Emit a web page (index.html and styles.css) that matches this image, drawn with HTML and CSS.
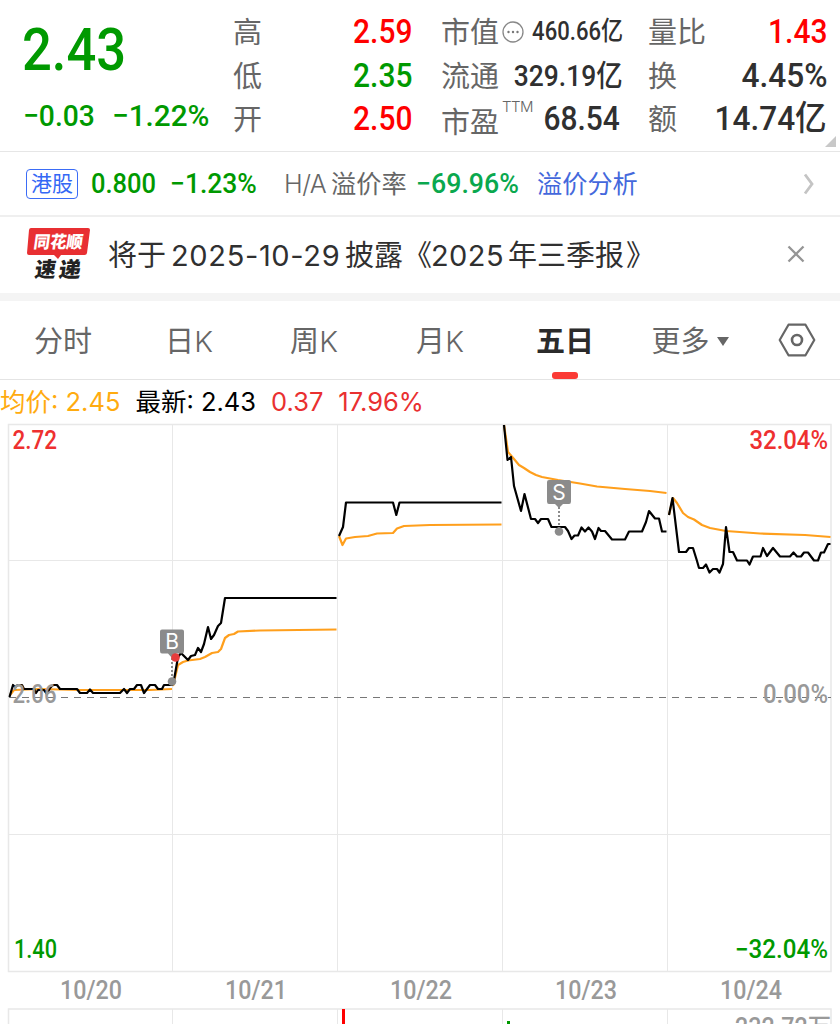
FILE: index.html
```html
<!DOCTYPE html>
<html lang="zh-CN">
<head>
  <meta charset="UTF-8">
  <meta name="viewport" content="width=device-width, initial-scale=1.0">
  <title>五日</title>
  <link rel="stylesheet" href="styles.css">
</head>
<body>
  <header class="quote">
    <div class="price">
      <div class="num last">2.43</div>
      <div class="change">
        <span class="num diff">−0.03</span>
        <span class="num rate">−1.22%</span>
      </div>
    </div>
    <div class="stats">
      <div class="stat"><span>高</span><b class="num red">2.59</b></div>
      <div class="stat"><span>低</span><b class="num green">2.35</b></div>
      <div class="stat"><span>开</span><b class="num red">2.50</b></div>
    </div>
    <div class="stats">
      <div class="stat">
        <span>市值</span>
        <svg class="dots" width="22" height="22" viewBox="0 0 22 22">
          <circle cx="11" cy="11" r="10" fill="none" stroke="#888" stroke-width="1.3"/>
          <circle cx="6.5" cy="11" r="1.2" fill="#777"/>
          <circle cx="11" cy="11" r="1.2" fill="#777"/>
          <circle cx="15.5" cy="11" r="1.2" fill="#777"/>
        </svg>
        <b class="num small">460.66亿</b>
      </div>
      <div class="stat"><span>流通</span><b class="num medium">329.19亿</b></div>
      <div class="stat"><span class="pe">市盈</span><sup>TTM</sup><b class="num">68.54</b></div>
    </div>
    <div class="stats last-stats">
      <div class="stat"><span>量比</span><b class="num red">1.43</b></div>
      <div class="stat"><span>换</span><b class="num wide">4.45%</b></div>
      <div class="stat"><span>额</span><b class="num wide">14.74亿</b></div>
    </div>
    <i class="corner"></i>
  </header>

  <div class="hk">
    <span class="badge">港股</span>
    <span class="num hk-price">0.800</span>
    <span class="num hk-rate">−1.23%</span>
    <span class="premium"><span class="ha">H/A</span>溢价率</span>
    <span class="num premium-rate">−69.96%</span>
    <a class="analysis">溢价分析</a>
    <svg class="arrow" width="12" height="22" viewBox="0 0 12 22">
      <path d="M2 1.5L9 11L2 20.5" fill="none" stroke="#c4c4c4" stroke-width="2.8"/>
    </svg>
  </div>

  <div class="notice">
    <svg class="logo" width="66" height="54" viewBox="0 0 66 54">
      <path d="M5 1H62Q64 1 64 3L61 26Q60.700 28 58.500 28H35L32 32L28 28H3Q1 28 1 26L3 3Q3.300 1 5 1Z" fill="#e82f32"/>
      <g transform="skewX(-8)">
        <text class="logo-text" x="10" y="21" textLength="49" lengthAdjust="spacingAndGlyphs" fill="#fff">同花顺</text>
        <text class="logo-text logo-big" x="15" y="50" textLength="21" lengthAdjust="spacingAndGlyphs" fill="#222">速</text>
        <text class="logo-text logo-big" x="39" y="50" textLength="22" lengthAdjust="spacingAndGlyphs" fill="#222">递</text>
      </g>
    </svg>
    <p><span>将于</span><span class="date">2025-10-29</span><span>披露</span><span class="book">《</span><span class="year">2025</span><span>年三季报</span><span class="book-end">》</span></p>
    <svg class="close" width="18" height="18" viewBox="0 0 18 18">
      <path d="M1.500 1.500L16.500 16.500M16.500 1.500L1.500 16.500" stroke="#959595" stroke-width="2.300"/>
    </svg>
  </div>

  <nav class="tabs">
    <a>分时</a>
    <a>日<em>K</em></a>
    <a>周<em>K</em></a>
    <a>月<em>K</em></a>
    <a class="active">五日</a>
    <a class="more">更多<i></i></a>
    <svg class="setting" width="38" height="34" viewBox="0 0 38 34">
      <path d="M10.500 1.700H27.500L36.300 17L27.500 32.300H10.500L1.700 17Z" fill="none" stroke="#666" stroke-width="2.200" stroke-linejoin="round"/>
      <circle cx="19" cy="17" r="5" fill="none" stroke="#666" stroke-width="2.600"/>
    </svg>
  </nav>

  <div class="info">
    <span class="avg">均价: <em>2.45</em></span>
    <span class="now">最新: <em>2.43</em></span>
    <span class="up">0.37</span>
    <span class="up">17.96%</span>
  </div>

  <svg class="chart" width="840" height="601" viewBox="0 423 840 601">
    <!-- grid -->
    <g class="grid">
      <path d="M172.500 424V972M337.500 424V972M502.500 424V972M667.500 424V972M8 560.500H831M8 834.500H831"/>
      <path d="M172.500 1009V1024M337.500 1009V1024M502.500 1009V1024M667.500 1009V1024"/>
      <path class="frame" d="M8.500 424.500H831V971.500H8.500ZM8.500 1030V1009H831V1030"/>
    </g>
    <path class="zero" d="M9 697.500H831"/>

    <!-- average price -->
    <g class="avg-line">
      <path d="M10 695L14 690L40 689L80 690H150L172 689"/>
      <path d="M173 686L178 665L183 662L188 660.500L200 659L205 657L212 653L218 652L221 649L225 638L229 635L234 634L238 631.500L260 630.500L336.500 629.500"/>
      <path d="M339 536L342.500 545L346 538.500L355 537L368 536L377 533.500L393 533L397 528.500L404 526L430 525L501.500 524.500"/>
      <path d="M504 425L508 452L514 459L519 465L524 468L530 472L536 475L542 477L558 480L580 483.500L597 486.500L625 489L650 491L666.500 493"/>
      <path d="M669 515L673 498L677 503L683 513L688 517L694 519.500L702 525L710 528L726 531L760 533.500L805 535L830.500 537"/>
    </g>

    <!-- price -->
    <g class="price-line">
      <path d="M9.500 697L13 685L15 687L18 685L22 685L24 689H34L36 693L38 690L44 690L47 694L50 688L53 685H57L60 689H77L80 693H87L90 689.500L93 693H120L124 689L127 693L130 689H134L137 685H141L144 693L150 685H155L158 689H162L164 685H172L174 680L178 657L181 653L188 660L191 656L195 655L198 648L201 652L204 644L208 627L211 639L214 635L218 626L221 623L225 598H336.500"/>
      <path d="M339 536L343 527L346 502.500H393L396.300 515L399.500 502.500H501.500"/>
      <path d="M504 425L507.500 460L511 457L514 486L521 511L524.500 494L531 519H535L538 523L541 519H548L551.500 527H565L568 531L571.500 539L574.500 535.500H578L581.500 527.500L585 531.500L588.500 527.500L592 531.500L595 539L598.500 528L601 531H605L612 539.500H625L629 531.500H642L646 522L649 511L655 518.500H659L662 531.500H666.500"/>
      <path d="M669 515L672.500 498L679 552H686L689 548H693L697 561L699 568H703L706 564.500L709.500 572.500L713 569H717L719.500 572.500L723 564L726 527L729.500 552H733L737 560.500H747L749.500 564.500L753 556.500H760.500L763 548L767 556L773 548L780 556.500H790L793.500 552.500L797 556.500H801L804 552.500H808L814 560.500H818L821 552.500H824L828 544H830.500"/>
    </g>

    <text class="axis gray" x="12.500" y="703" textLength="44" lengthAdjust="spacingAndGlyphs">2.06</text>
    <text class="axis gray" x="763" y="703" textLength="65" lengthAdjust="spacingAndGlyphs">0.00%</text>

    <!-- buy / sell marks -->
    <g class="mark">
      <path class="stem" d="M172 658V680"/>
      <circle cx="172" cy="681.500" r="4.300"/>
      <path d="M162 629.500H182Q184 629.500 184 631.500V651Q184 653.500 182 653.500H176L172 658L168 653.500H162Q160 653.500 160 651V631.500Q160 629.500 162 629.500Z"/>
      <circle class="dot" cx="175.500" cy="657.500" r="4.300"/>
      <text x="172" y="649" text-anchor="middle">B</text>
    </g>
    <g class="mark">
      <path class="stem" d="M559 507V530"/>
      <circle cx="559" cy="531.500" r="4.300"/>
      <path d="M549 480H569Q571 480 571 482V501.500Q571 504 569 504H563L559 508L555 504H549Q547 504 547 501.500V482Q547 480 549 480Z"/>
      <text x="559" y="500" text-anchor="middle">S</text>
    </g>

    <text class="axis up" x="12.500" y="448.500" textLength="44.500" lengthAdjust="spacingAndGlyphs">2.72</text>
    <text class="axis up" x="749.500" y="448.500" textLength="78.500" lengthAdjust="spacingAndGlyphs">32.04%</text>
    <text class="axis down" x="14" y="957.500" textLength="43" lengthAdjust="spacingAndGlyphs">1.40</text>
    <text class="axis down" x="735" y="957.500" textLength="93" lengthAdjust="spacingAndGlyphs">−32.04%</text>

    <g class="axis date-axis">
      <text x="60" y="998.500" textLength="62" lengthAdjust="spacingAndGlyphs">10/20</text>
      <text x="225" y="998.500" textLength="62" lengthAdjust="spacingAndGlyphs">10/21</text>
      <text x="390" y="998.500" textLength="62" lengthAdjust="spacingAndGlyphs">10/22</text>
      <text x="555" y="998.500" textLength="62" lengthAdjust="spacingAndGlyphs">10/23</text>
      <text x="720" y="998.500" textLength="62" lengthAdjust="spacingAndGlyphs">10/24</text>
    </g>

    <!-- volume -->
    <path d="M343.500 1009V1024" stroke="#f00" stroke-width="3"/>
    <path d="M508.500 1021V1024" stroke="#090" stroke-width="3"/>
    <text class="axis gray" x="735" y="1036" textLength="96" lengthAdjust="spacingAndGlyphs">232.72万</text>
  </svg>
</body>
</html>
```
FILE: styles.css
```css
* {
  box-sizing: border-box;
}

body {
  margin: 0;
  width: 840px;
  height: 1024px;
  overflow: hidden;
  background: #fff;
  color: #666;
  font-family: Inter, "Noto Sans CJK SC", sans-serif;
  font-size: 29px;
}

em,
i {
  font-style: normal;
}

/* narrow figures */
.num {
  display: inline-block;
  flex-shrink: 0;
  font-family: Roboto, "Noto Sans CJK SC", sans-serif;
  font-weight: 500;
  white-space: nowrap;
  transform: scaleX(0.88);
  transform-origin: left center;
}

.red {
  color: #f00;
}

.green {
  color: #090;
}

.quote {
  position: relative;
  display: grid;
  grid-template-columns: 209px 179px 180px 180px;
  height: 152px;
  padding: 10px 0 0 24px;
  border-bottom: 1px solid #e6e6e6;
}

.price {
  color: #090;
}

.last {
  margin-left: -2px;
  font-size: 60px;
  line-height: 80px;
  transform: scaleX(0.875);
}

.change {
  display: flex;
  height: 51px;
  font-size: 30px;
  line-height: 51px;
}

.change .num {
  margin-left: -1px;
  transform: scaleX(0.94);
}

.change .rate {
  transform: scaleX(0.99);
}

.diff {
  width: 90px;
}

.stats {
  width: 179px;
}

.stats + .stats {
  margin-left: 29px;
}

.stats.last-stats {
  margin-left: 56px;
}

.stat {
  display: flex;
  align-items: center;
  height: 43.500px;
  line-height: 43px;
  white-space: nowrap;
}

.stat > span {
  padding-top: 2px;
}

.stat .num {
  margin-left: auto;
  font-size: 34px;
  transform-origin: right center;
}

.stats + .stats .num:not(.red) {
  color: #303030;
}

.stat .small {
  margin-left: -8px;
  font-size: 26px;
  transform: scaleX(0.85);
}

.stat .medium {
  font-size: 30px;
}

.stat .wide {
  transform: scaleX(0.93);
}

.stat .pe {
  padding-top: 7px;
}

.stat sup {
  align-self: flex-start;
  margin: 1px -20px 0 3px;
  font-size: 15px;
  font-weight: 300;
  line-height: 18px;
  letter-spacing: -0.5px;
}

.dots {
  flex-shrink: 0;
  margin-left: 3px;
}

.corner {
  position: absolute;
  right: 4px;
  bottom: 4px;
  border-left: 11px solid transparent;
  border-bottom: 11px solid #c8c8c8;
}

.hk {
  display: flex;
  align-items: center;
  height: 65px;
  padding: 0 25px 0 26px;
  border-bottom: 2px solid #efefef;
  font-size: 25.200px;
  line-height: 36px;
  white-space: nowrap;
}

.badge {
  width: 52px;
  height: 30px;
  border: 1.500px solid #3b6cf6;
  border-radius: 4px;
  color: #3468f5;
  font-size: 21px;
  line-height: 27px;
  text-align: center;
}

.hk .num {
  font-size: 28px;
  transform: scaleX(0.945);
}

.hk .hk-price {
  width: 79px;
  margin-left: 13px;
  color: #090;
  transform: scaleX(0.91);
}

.hk-rate {
  width: 114px;
  color: #090;
}

.premium {
  width: 132px;
}

.ha {
  display: inline-block;
  width: 47px;
  font-weight: 300;
  letter-spacing: -0.5px;
}

.hk .premium-rate {
  width: 121px;
  color: #0aa84e;
  transform: scaleX(0.955);
}

.analysis {
  color: #4468dc;
}

.arrow {
  margin-left: auto;
}

.notice {
  display: flex;
  align-items: center;
  height: 84px;
  border-bottom: 8px solid #f4f4f4;
  padding: 0 35px 2px 26px;
  color: #303030;
}

.notice p {
  display: flex;
  align-items: baseline;
  margin: -3px 0 0 16px;
  white-space: nowrap;
}

.date {
  width: 170px;
  margin: 0 4px 0 5px;
  letter-spacing: 0.650px;
}

.book {
  width: 28px;
}

.year {
  width: 73px;
  margin-right: 4px;
  letter-spacing: 0.400px;
}

.book-end {
  margin-left: 2px;
}

.close {
  margin-left: auto;
}

.logo {
  overflow: visible;
}

.logo-text {
  font-family: "Noto Sans CJK SC", sans-serif;
  font-size: 17px;
  font-weight: 900;
}

.logo-big {
  font-size: 21px;
}

.tabs {
  display: grid;
  grid-template-columns: 126px 126px 124px 128px 122px 130px 84px;
  align-items: center;
  height: 79px;
  border-bottom: 1px solid #e4e4e4;
}

.tabs a {
  position: relative;
  height: 78px;
  padding-top: 2px;
  line-height: 78px;
  text-align: center;
}

.tabs em {
  font-weight: 300;
}

.tabs .active {
  color: #2b2b2b;
  font-weight: 700;
}

.active::after {
  content: "";
  position: absolute;
  left: 48px;
  bottom: 0;
  width: 26px;
  height: 7px;
  border-radius: 3px;
  background: #fb3a35;
}

.tabs .more {
  margin-left: -2px;
}

.more i {
  display: inline-block;
  margin-left: 7px;
  border: 6.500px solid transparent;
  border-top: 9px solid #666;
  border-bottom: 0;
  vertical-align: 6px;
}

.setting {
  margin-left: 22px;
}

.info {
  display: flex;
  height: 43px;
  font-size: 25.500px;
  line-height: 44px;
  white-space: nowrap;
}

.info span {
  margin-right: 15px;
}

.avg {
  color: #ffab0f;
}

.now {
  color: #000;
}

.info .up {
  color: #e93030;
}

.chart {
  display: block;
}

.grid path {
  fill: none;
  stroke: #e8e8e8;
  stroke-width: 1;
}

.grid .frame {
  stroke-width: 1.500;
}

.zero {
  stroke: #777;
  stroke-width: 1;
  stroke-dasharray: 7 6;
}

.avg-line,
.price-line {
  fill: none;
  stroke-width: 2.200;
  stroke-linejoin: round;
}

.avg-line {
  stroke: #ff9f1c;
}

.price-line {
  stroke: #000;
}

.axis {
  font-family: Roboto, "Noto Sans CJK SC", sans-serif;
  font-size: 25px;
  font-weight: 500;
}

.chart .gray,
.date-axis {
  fill: #999;
}

.chart .up {
  fill: #ee3030;
}

.chart .down {
  fill: #090;
}

.mark {
  fill: #8b8b8b;
}

.mark .stem {
  stroke: #8b8b8b;
  stroke-width: 2;
  stroke-dasharray: 2 2;
}

.mark .dot {
  fill: #e63c3c;
}

.mark text {
  fill: #fff;
  font-size: 21px;
}
```
